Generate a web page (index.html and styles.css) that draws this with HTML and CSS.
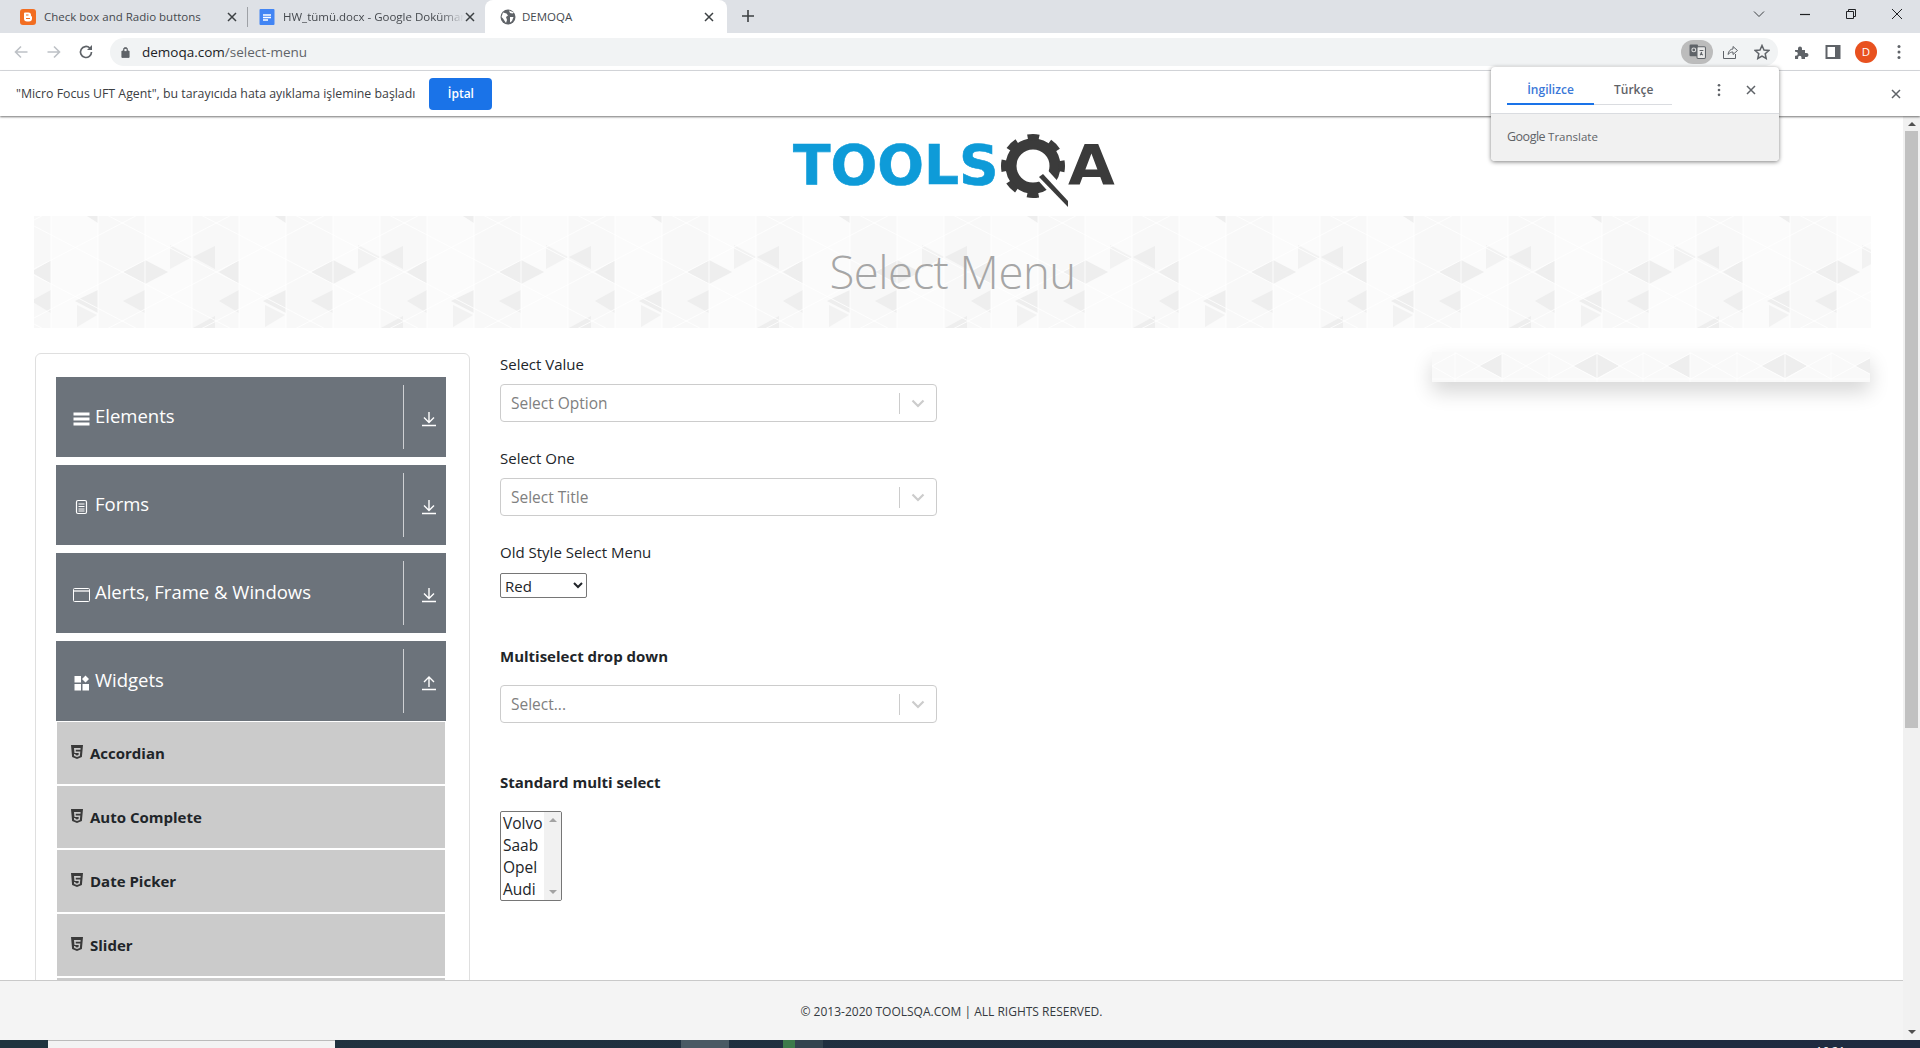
FILE: index.html
```html
<!DOCTYPE html>
<html lang="tr">
<head>
  <meta charset="UTF-8">
  <meta name="viewport" content="width=device-width, initial-scale=1.0">
  <title>DEMOQA</title>
  <link rel="stylesheet" href="styles.css">
</head>
<body>

<svg class="sprites" width="0" height="0">
  <defs>
    <symbol id="i-close" viewBox="0 0 12 12"><path d="M2 2l8 8M10 2l-8 8" fill="none" stroke="currentColor" stroke-width="1.5"/></symbol>
    <symbol id="i-dots" viewBox="0 0 4 16"><circle cx="2" cy="2.5" r="1.5"/><circle cx="2" cy="8" r="1.5"/><circle cx="2" cy="13.5" r="1.5"/></symbol>
    <symbol id="i-down" viewBox="0 0 16 16"><path d="M8 1v10M3 6.500L8 11.500l5-5M1 14.500h14" fill="none" stroke="currentColor" stroke-width="1.400"/></symbol>
    <symbol id="i-up" viewBox="0 0 16 16"><path d="M8 12V2M3 7l5-5 5 5M1 14.500h14" fill="none" stroke="currentColor" stroke-width="1.400"/></symbol>
    <symbol id="i-html5" viewBox="0 0 12 14"><path fill-rule="evenodd" d="M0 0h12l-1.100 12L6 14l-4.900-2zM3 3l.5 5h4.200l-.2 2L6 10.600 4.500 10l-.1-1H3l.2 2L6 12l2.800-1 .5-4.500H4.800L4.700 4.700h4.800L9.600 3z"/></symbol>
    <symbol id="i-chevron" viewBox="0 0 20 20"><path d="M4.500 7.500L10 13l5.500-5.500" fill="none" stroke="currentColor" stroke-width="2.200"/></symbol>

    <pattern id="hero-tri" width="188" height="112" patternUnits="userSpaceOnUse">
      <rect width="188" height="112" fill="#f8f8f8"/>
      <path fill="#fbfbfb" d="M17 0h47v112H17zM111 0h47v112h-47z"/>
      <path fill="#eeeeee" d="M89 56l22-12v24zM111 44v24l23-12zM89 85l22-11v23zM41 85l23-11v23zM159 41l22-11v23zM-3 56l20-12v24zM-3 85l20-11v23zM185 56l20-12v24zM185 85l20-11v23zM53 0h11v7zM159 112l22-12v12z"/>
      <path fill="#f2f2f2" d="M43 89l20 10-20 12zM136 29v24l22-12z"/>
      <path fill="none" stroke="#ffffff" stroke-opacity=".8" d="M17 0v112M64 0v112M111 0v112M158 0v112M0-88L188 10M0-39L188 59M0 10L188 108M0 59L188 157M0 108L188 206M0 4L188-94M0 53L188-45M0 102L188 4M0 151L188 53M0 200L188 102"/>
    </pattern>
    <pattern id="ad-tri" width="188" height="30" patternUnits="userSpaceOnUse">
      <rect width="188" height="30" fill="#f9f9f9"/>
      <path fill="#eeeeee" d="M47 14L70 2v24zM141 14l24-12v24zM165 2v24l22-12z"/>
      <path fill="none" stroke="#ffffff" stroke-opacity=".8" d="M0 14L24 1l23 13 24-13 23 13 23-13 24 13 24-13 23 13M0 14l23 13 24-13 24 13 23-13 23 13 24-13 24 13 23-13M23 0v30M70 0v30M117 0v30M165 0v30M0 27h188"/>
    </pattern>
  </defs>
</svg>

<div class="tabstrip">
  <div class="tab">
    <svg class="favicon" viewBox="0 0 16 16"><rect width="16" height="16" rx="3" fill="#f26d21"/><path d="M5 3.500h3.500a2.500 2.500 0 0 1 2.500 2.500v.5a1 1 0 0 0 1 1v2A3 3 0 0 1 9 12.500H7A3 3 0 0 1 4 9.500V4.500a1 1 0 0 1 1-1z" fill="#fff"/><path d="M6 6h2.500M6 9.500h4" stroke="#f26d21" stroke-width="1.200"/></svg>
    <span class="tab-title">Check box and Radio buttons</span>
    <svg class="tab-x"><use href="#i-close"/></svg>
  </div>
  <div class="tab tab-docs">
    <svg class="favicon" viewBox="0 0 16 16"><path d="M1.500 0h13a1 1 0 0 1 1 1v14a1 1 0 0 1-1 1h-13a1 1 0 0 1-1-1V1a1 1 0 0 1 1-1z" fill="#4285f4"/><path d="M4 6h8M4 8.500h8M4 11h5" stroke="#fff" stroke-width="1.300"/></svg>
    <span class="tab-title tab-title-fade">HW_tümü.docx - Google Doküman</span>
    <svg class="tab-x"><use href="#i-close"/></svg>
  </div>
  <div class="tab tab-active">
    <svg class="favicon" viewBox="0 0 16 16"><circle cx="8" cy="8" r="7.500" fill="#5f6368"/><path d="M3 3.500l3.500 1 1.500 2-2 1.500 1 3-1 3L3 9.500 1.500 8zM9 1.500l1 2.500 2.500.5 1.500-1M10 8h3.500L12 12l-2 1.500z" fill="#fff"/></svg>
    <span class="tab-title">DEMOQA</span>
    <svg class="tab-x"><use href="#i-close"/></svg>
  </div>
  <svg class="new-tab" viewBox="0 0 12 12"><path d="M6 0v12M0 6h12" stroke="#3c4043" stroke-width="1.600"/></svg>
  <div class="window-controls">
    <svg viewBox="0 0 12 12"><path d="M1 3.500l5 5 5-5" fill="none" stroke="#3c4043"/></svg>
    <svg viewBox="0 0 12 12"><path d="M1 6.500h10" stroke="#202124" stroke-width="1.200"/></svg>
    <svg viewBox="0 0 12 12"><path d="M1.500 3.500h7v7h-7zM3.500 3.500v-2h7v7h-2" fill="none" stroke="#202124"/></svg>
    <svg viewBox="0 0 12 12"><path d="M1 1l10 10M11 1L1 11" stroke="#202124"/></svg>
  </div>
</div>

<div class="toolbar">
  <svg class="nav-icon nav-off" viewBox="0 0 16 16"><path d="M14.500 8h-12M8 2.500L2.500 8 8 13.500" fill="none" stroke="currentColor" stroke-width="1.600"/></svg>
  <svg class="nav-icon nav-off" viewBox="0 0 16 16"><path d="M1.500 8h12M8 2.500L13.500 8 8 13.500" fill="none" stroke="currentColor" stroke-width="1.600"/></svg>
  <svg class="nav-icon" viewBox="0 0 16 16"><path d="M13.500 8A5.500 5.500 0 1 1 11.800 4" fill="none" stroke="currentColor" stroke-width="1.700"/><path d="M14 1v5H9z"/></svg>
  <div class="omnibox">
    <svg class="lock" viewBox="0 0 10 12"><path d="M1 5h8v7H1z M2.800 5V3.200a2.200 2.200 0 0 1 4.400 0V5" fill="#5f6368" stroke="#5f6368"/><rect x="3.800" y="2.600" width="2.400" height="2.400" fill="#f1f3f4"/></svg>
    <span class="url">demoqa.com<span class="url-path">/select-menu</span></span>
    <span class="translate-chip">
      <svg viewBox="0 0 16 16"><rect x=".5" y="1.500" width="8" height="11" rx="1" fill="#5f6368"/><rect x="7.500" y="3.500" width="8" height="11" rx="1" fill="#e8e8e8" stroke="#5f6368"/><path d="M10 7h3.500M12 8.500l-1.500 3M11 9l2 2.500" stroke="#5f6368" fill="none"/><circle cx="4.500" cy="6.500" r="1.800" fill="none" stroke="#ddd"/></svg>
    </span>
    <svg class="omni-icon" viewBox="0 0 16 16"><path d="M1.500 7v7.500h12V10M6 10.500C6.500 7 8.500 5 11 5V2.500L15.500 6.500 11 10.500V8C9 8 7.500 8.800 6 10.500z" fill="none" stroke="currentColor"/></svg>
    <svg class="omni-icon" viewBox="0 0 16 16"><path d="M8 1.500l2 4.500 4.800.5-3.600 3.200 1 4.800L8 12.100 3.800 14.500l1-4.800L1.200 6.500 6 6z" fill="none" stroke="currentColor" stroke-width="1.500"/></svg>
  </div>
  <svg class="tool-icon" viewBox="0 0 16 16"><path d="M1 6h3V4.500a2 2 0 0 1 4 0V6h3v3h1.500a2 2 0 0 1 0 4H11v2H7.500v-1.500a1.700 1.700 0 0 0-3.400 0V15H1v-3.200h.8a2 2 0 0 0 0-4H1z" fill="#5f6368"/></svg>
  <svg class="tool-icon" viewBox="0 0 16 16"><rect x="1.500" y="2" width="13" height="12" fill="none" stroke="#5f6368" stroke-width="2"/><rect x="10" y="2" width="5" height="12" fill="#5f6368"/></svg>
  <span class="avatar">D</span>
  <svg class="tool-dots"><use href="#i-dots"/></svg>
</div>

<div class="infobar">
  <span class="infobar-text">"Micro Focus UFT Agent", bu tarayıcıda hata ayıklama işlemine başladı</span>
  <button class="infobar-btn">İptal</button>
  <svg class="infobar-x"><use href="#i-close"/></svg>
</div>

<div class="translate-pop">
  <div class="pop-head">
    <div class="pop-tabs">
      <span class="pop-tab pop-tab-on">İngilizce</span>
      <span class="pop-tab">Türkçe</span>
    </div>
    <svg class="pop-dots"><use href="#i-dots"/></svg>
    <svg class="pop-x"><use href="#i-close"/></svg>
  </div>
  <div class="pop-foot"><span class="g-word">Google</span> Translate</div>
</div>

<div class="viewport">
  <div class="page-col">
    <div class="page">
      <header class="logo-row">
        <div class="logo">
          <span class="logo-tools">TOOLS</span>
          <svg class="logo-gear" viewBox="0 0 68 74">
            <circle cx="32" cy="33" r="22" fill="none" stroke="#3b3b3b" stroke-width="11"/>
            <circle cx="32" cy="33" r="29" fill="none" stroke="#3b3b3b" stroke-width="6" stroke-dasharray="11.400 11.400" stroke-dashoffset="5.700"/>
            <path d="M38 38l29 32" stroke="#fff" stroke-width="14"/>
            <path d="M42 41l25 27v6L38 44z" fill="#3b3b3b"/>
          </svg>
          <span class="logo-a">A</span>
        </div>
      </header>

      <div class="hero">
        <svg class="hero-bg"><rect width="100%" height="100%" fill="url(#hero-tri)"/></svg>
        <h1 class="hero-title">Select Menu</h1>
      </div>

      <div class="content">
        <aside class="side-card">
          <div class="group">
            <svg class="group-icon" viewBox="0 0 16 16"><path d="M0 1.500h16v3H0zM0 6.500h16v3H0zM0 11.500h16v3H0z" fill="#fff"/></svg>
            <span class="group-name">Elements</span>
            <span class="group-arrow"><svg><use href="#i-down"/></svg></span>
          </div>
          <div class="group">
            <svg class="group-icon" viewBox="0 0 16 16"><rect x="3" y="1.500" width="10" height="13" rx="1.500" fill="none" stroke="#fff" stroke-width="1.200"/><path d="M5 5h6M5 7.500h6M5 10h6M5 12h6" stroke="#fff"/></svg>
            <span class="group-name">Forms</span>
            <span class="group-arrow"><svg><use href="#i-down"/></svg></span>
          </div>
          <div class="group">
            <svg class="group-icon" viewBox="0 0 17 16"><rect x=".5" y="1.500" width="16" height="13" rx="1" fill="none" stroke="#fff"/><path d="M1 4h15" stroke="#fff" stroke-width="1.300"/></svg>
            <span class="group-name">Alerts, Frame &amp; Windows</span>
            <span class="group-arrow"><svg><use href="#i-down"/></svg></span>
          </div>
          <div class="group">
            <svg class="group-icon" viewBox="0 0 16 16"><path d="M1 1h6.500v6.500H1zM1 9h6.500v6.500H1zM9 9h6.500v6.500H9zM12 .5l3.500 3.500L12 7.500 8.500 4z" fill="#fff"/></svg>
            <span class="group-name">Widgets</span>
            <span class="group-arrow"><svg><use href="#i-up"/></svg></span>
          </div>
          <ul class="items">
            <li class="item"><svg><use href="#i-html5"/></svg>Accordian</li>
            <li class="item"><svg><use href="#i-html5"/></svg>Auto Complete</li>
            <li class="item"><svg><use href="#i-html5"/></svg>Date Picker</li>
            <li class="item"><svg><use href="#i-html5"/></svg>Slider</li>
            <li class="item"></li>
          </ul>
        </aside>

        <section class="form-col">
          <div class="field">
            <label class="lbl">Select Value</label>
            <div class="combo"><span>Select Option</span><i class="combo-sep"></i><svg class="combo-arrow"><use href="#i-chevron"/></svg></div>
          </div>
          <div class="field">
            <label class="lbl">Select One</label>
            <div class="combo"><span>Select Title</span><i class="combo-sep"></i><svg class="combo-arrow"><use href="#i-chevron"/></svg></div>
          </div>
          <div class="field field-old">
            <label class="lbl">Old Style Select Menu</label>
            <select class="old-select"><option>Red</option><option>Blue</option><option>Green</option></select>
          </div>
          <div class="field field-wide">
            <label class="lbl lbl-strong">Multiselect drop down</label>
            <div class="combo"><span>Select...</span><i class="combo-sep"></i><svg class="combo-arrow"><use href="#i-chevron"/></svg></div>
          </div>
          <div class="field field-wide">
            <label class="lbl lbl-strong">Standard multi select</label>
            <div class="listbox">
              <ul class="listbox-items"><li>Volvo</li><li>Saab</li><li>Opel</li><li>Audi</li></ul>
              <div class="listbox-bar"><i class="tri-up"></i><i class="tri-down"></i></div>
            </div>
          </div>
        </section>

        <div class="ad-box">
          <svg class="ad-bg"><rect width="100%" height="100%" fill="url(#ad-tri)"/></svg>
        </div>
      </div>
    </div>

    <footer class="site-footer">© 2013-2020 TOOLSQA.COM | ALL RIGHTS RESERVED.</footer>
  </div>

  <div class="scrollbar">
    <i class="tri-up"></i>
    <div class="thumb"></div>
    <i class="tri-down"></i>
  </div>
</div>

<div class="taskbar">
  <i class="task-search"></i>
  <i class="task-app"></i>
  <i class="task-green"></i>
  <i class="task-slate"></i>
  <span class="task-clock">16:21</span>
</div>

</body>
</html>
```

FILE: styles.css
```css
* {
  box-sizing: border-box;
}
html, body {
  margin: 0;
  height: 1048px;
  overflow: hidden;
}
body {
  position: relative;
  display: flex;
  flex-direction: column;
  font-family: "Open Sans", "Noto Sans", sans-serif;
  color: #212529;
  background: #fff;
}
.sprites {
  position: absolute;
}

/* browser tabs */
.tabstrip {
  display: flex;
  align-items: flex-end;
  height: 33px;
  flex: none;
  padding-left: 9px;
  background: #dee1e6;
}
.tab {
  display: flex;
  align-items: center;
  width: 238px;
  height: 33px;
  padding: 0 5px 0 11px;
  position: relative;
  color: #45494e;
  font-size: 11.500px;
}
.tab-docs::before {
  content: "";
  position: absolute;
  left: 0;
  top: 7px;
  height: 20px;
  border-left: 1px solid #9ea1a6;
}
.tab-docs {
  padding-left: 12px;
}
.tab-active {
  width: 242px;
  padding: 0 8px 0 15px;
  background: #fff;
  border-radius: 8px 8px 0 0;
}
.favicon {
  width: 16px;
  height: 16px;
  flex: none;
}
.tab-title {
  flex: 1;
  margin-left: 8px;
  white-space: nowrap;
  overflow: hidden;
}
.tab-active .tab-title {
  margin-left: 6px;
}
.tab-title-fade {
  -webkit-mask-image: linear-gradient(to left, transparent, #000 24px);
  mask-image: linear-gradient(to left, transparent, #000 24px);
}
.tab-x {
  width: 12px;
  height: 12px;
  margin-right: 4px;
  flex: none;
  color: #3c4043;
}
.new-tab {
  width: 12px;
  height: 12px;
  margin: 0 0 11px 15px;
}
.window-controls {
  display: flex;
  gap: 34px;
  margin-left: auto;
  margin-right: 17px;
  margin-bottom: 13px;
}
.window-controls svg {
  width: 12px;
  height: 12px;
}

/* address bar */
.toolbar {
  display: flex;
  align-items: center;
  height: 38px;
  flex: none;
  padding-left: 13px;
  background: #fff;
  border-bottom: 1px solid #dadce0;
}
.nav-icon {
  width: 16px;
  height: 16px;
  margin-right: 17px;
  color: #5f6368;
  fill: #5f6368;
}
.nav-off {
  color: #bdc1c6;
}
.nav-off + .nav-off {
  margin-right: 16px;
}
.omnibox {
  display: flex;
  align-items: center;
  width: 1668px;
  height: 28px;
  margin-left: -1px;
  padding: 0 8px 0 11px;
  background: #f1f3f4;
  border-radius: 14px;
}
.lock {
  width: 9px;
  height: 12px;
}
.url {
  flex: 1;
  margin-left: 12px;
  font-size: 13.500px;
  color: #202124;
}
.url-path {
  color: #5f6368;
}
.translate-chip {
  display: flex;
  align-items: center;
  justify-content: center;
  width: 32px;
  height: 24px;
  background: #bcbcbc;
  border-radius: 12px;
}
.translate-chip svg {
  width: 17px;
  height: 17px;
}
.omni-icon {
  width: 16px;
  height: 16px;
  margin-left: 9px;
  margin-right: 8px;
  color: #5f6368;
}
.omni-icon + .omni-icon {
  margin-left: 8px;
  margin-right: 0;
}
.tool-icon {
  width: 16px;
  height: 16px;
  margin-left: 16px;
}
.tool-icon + .tool-icon {
  margin-left: 15px;
}
.avatar {
  width: 22px;
  height: 22px;
  margin-left: 14px;
  border-radius: 50%;
  background: #e8511f;
  color: #fff;
  font-size: 11.500px;
  line-height: 22px;
  text-align: center;
}
.tool-dots {
  width: 4px;
  height: 16px;
  margin-left: 20px;
  fill: #5f6368;
}

/* debug bar */
.infobar {
  display: flex;
  align-items: center;
  height: 45px;
  flex: none;
  padding: 0 18px 0 16px;
  background: #fff;
  box-shadow: 0 1px 2px rgba(0, 0, 0, .55);
  position: relative;
  z-index: 2;
}
.infobar-text {
  font-size: 12.330px;
  color: #3c4043;
}
.infobar-btn {
  width: 63px;
  height: 32px;
  margin-left: 14px;
  border: 0;
  border-radius: 4px;
  background: #1a73e8;
  color: #fff;
  font-family: inherit;
  font-size: 12px;
  font-weight: 600;
}
.infobar-x {
  width: 12px;
  height: 12px;
  margin-left: auto;
  color: #5f6368;
}

/* translate popup, over the page */
.translate-pop {
  position: absolute;
  left: 1491px;
  top: 67px;
  width: 288px;
  height: 94px;
  z-index: 5;
  background: #fff;
  border-radius: 4px;
  box-shadow: 0 1px 4px rgba(0, 0, 0, .5);
  overflow: hidden;
}
.pop-head {
  display: flex;
  align-items: flex-start;
  height: 47px;
  padding: 12px 0 0 16px;
  border-bottom: 1px solid #dadce0;
}
.pop-tabs {
  display: flex;
  width: 165px;
  height: 26px;
  border-bottom: 1px solid #dadce0;
}
.pop-tab {
  width: 87px;
  font-size: 12px;
  font-weight: 600;
  color: #5f6368;
  text-align: center;
  line-height: 22px;
}
.pop-tab + .pop-tab {
  width: 78px;
  padding-right: 37px;
  padding-left: 20px;
  white-space: nowrap;
}
.pop-tab-on {
  height: 26px;
  color: #3b78d8;
  border-bottom: 2px solid #1a73e8;
}
.pop-dots {
  width: 4px;
  height: 14px;
  margin: 4px 0 0 45px;
  fill: #5f6368;
}
.pop-x {
  width: 12px;
  height: 12px;
  margin: 5px 0 0 24px;
  color: #5f6368;
}
.pop-foot {
  height: 47px;
  padding: 14px 0 0 16px;
  background: #f1f1f1;
  color: #5f6368;
  font-size: 11.500px;
}
.g-word {
  font-size: 12.500px;
  letter-spacing: -.5px;
}

/* page */
.viewport {
  display: flex;
  flex: 1;
  min-height: 0;
}
.page-col {
  display: flex;
  flex-direction: column;
  flex: 1;
  min-width: 0;
}
.page {
  flex: 1;
  min-height: 0;
  overflow: hidden;
  background: #fff;
}
.logo-row {
  display: flex;
  justify-content: center;
  height: 100px;
  padding: 17px 0 0 4px;
}
.logo {
  display: flex;
  align-items: flex-start;
  height: 74px;
}
.logo-tools, .logo-a {
  display: inline-block;
  font-family: "DejaVu Sans", sans-serif;
  font-weight: 700;
  font-size: 55px;
  line-height: 64px;
  transform-origin: left center;
}
.logo-tools {
  width: 200px;
  color: #0e9bd8;
  -webkit-text-stroke: .6px #0e9bd8;
  white-space: nowrap;
}
.logo-gear {
  width: 68px;
  height: 74px;
  margin-left: 8px;
  overflow: visible;
}
.logo-a {
  width: 46px;
  margin-left: -1px;
  color: #3b3b3b;
  transform: scaleX(1.1);
}
.hero {
  position: relative;
  height: 112px;
  margin: 0 32px 0 34px;
  display: flex;
  align-items: center;
  justify-content: center;
}
.hero-bg {
  position: absolute;
  inset: 0;
  width: 100%;
  height: 100%;
}
.hero-title {
  position: relative;
  margin: -2px 0 0;
  font-size: 45.500px;
  font-weight: 300;
  letter-spacing: -.5px;
  color: #a6a6a6;
}
.content {
  display: grid;
  grid-template-columns: 435px 467px 1fr;
  padding: 25px 33px 0 35px;
}

/* left menu */
.side-card {
  display: flex;
  flex-direction: column;
  gap: 8px;
  height: 900px;
  padding: 23px 23px 0 20px;
  border: 1px solid #dfdfdf;
  border-radius: 6px;
}
.group {
  display: flex;
  align-items: center;
  height: 80px;
  flex: none;
  padding-left: 17px;
  background: #6c737b;
  color: #fff;
  position: relative;
}
.group-icon {
  width: 17px;
  height: 16px;
  margin-top: 4px;
  flex: none;
}
.group-name {
  flex: 1;
  margin: -3px 0 0 5px;
  font-size: 18.500px;
}
.group-arrow {
  display: flex;
  align-items: center;
  justify-content: flex-end;
  width: 43px;
  height: 64px;
  padding-right: 9px;
  border-left: 1px solid #ced0d3;
}
.group-arrow svg {
  width: 16px;
  height: 16px;
  margin-top: 4px;
}
.items {
  display: flex;
  flex-direction: column;
  gap: 2px;
  margin: -7px 1px 0;
  padding: 0;
  list-style: none;
}
.item {
  display: flex;
  align-items: center;
  gap: 7px;
  height: 62px;
  flex: none;
  padding-left: 14px;
  background: #cbcbcb;
  font-size: 15px;
  font-weight: 700;
}
.item svg {
  width: 12px;
  height: 14px;
  margin-top: -2px;
  fill: #3a3a3a;
}

/* form */
.form-col {
  margin-left: 30px;
  font-size: 15px;
}
.field {
  margin-bottom: 25px;
}
.field-old {
  margin-bottom: 47px;
}
.field-wide {
  margin-bottom: 48px;
}
.lbl {
  display: block;
  height: 24px;
  margin-bottom: 7px;
  line-height: 22px;
}
.lbl-strong {
  margin-bottom: 16px;
  font-weight: 700;
}
.field-old .lbl {
  margin-bottom: 8px;
}
.combo {
  display: flex;
  align-items: center;
  height: 38px;
  padding-left: 10px;
  border: 1px solid #ccc;
  border-radius: 4px;
  color: #808080;
  font-size: 15.500px;
}
.combo span {
  flex: 1;
}
.combo-sep {
  width: 1px;
  height: 21px;
  background: #ccc;
}
.combo-arrow {
  width: 20px;
  height: 20px;
  margin: 0 8px;
  color: #ccc;
}
.old-select {
  display: block;
  width: 87px;
  height: 25px;
  background: #fff;
  border: 1px solid #767676;
  border-radius: 2px;
  font-family: inherit;
  font-size: 15px;
  color: #212529;
}
.listbox {
  display: flex;
  width: 62px;
  height: 90px;
  border: 1px solid #767676;
  border-radius: 2px;
  overflow: hidden;
}
.listbox-items {
  flex: 1;
  margin: 0;
  padding: 0;
  list-style: none;
  font-size: 15.500px;
}
.listbox-items li {
  height: 22px;
  padding-left: 2px;
  line-height: 22px;
}
.listbox-bar {
  display: flex;
  flex-direction: column;
  align-items: center;
  justify-content: space-between;
  width: 17px;
  padding: 6px 0;
  background: #f1f1f1;
}
.tri-up, .tri-down {
  display: block;
  width: 0;
  height: 0;
  border-left: 4px solid transparent;
  border-right: 4px solid transparent;
}
.tri-up {
  border-bottom: 4px solid #a3a3a3;
}
.tri-down {
  border-top: 4px solid #a3a3a3;
}
.ad-box {
  position: relative;
  width: 438px;
  height: 30px;
  margin-top: -1px;
  justify-self: end;
  box-shadow: 0 10px 20px rgba(0, 0, 0, .16);
}
.ad-bg {
  position: absolute;
  inset: 0;
  width: 100%;
  height: 100%;
}
.site-footer {
  height: 60px;
  flex: none;
  padding-top: 21px;
  background: #f4f4f4;
  border-top: 1px solid #c9c9c9;
  font-size: 12px;
  line-height: 20px;
  text-align: center;
  color: #343a40;
}
.scrollbar {
  display: flex;
  flex-direction: column;
  align-items: center;
  width: 17px;
  flex: none;
  padding: 6px 0;
  background: #f1f1f1;
}
.thumb {
  width: 13px;
  height: 597px;
  margin: 5px 0 auto;
  background: #c1c1c1;
}
.scrollbar .tri-up {
  border-bottom-color: #505050;
}
.scrollbar .tri-down {
  border-top-color: #505050;
}

/* taskbar, cut off by the window */
.taskbar {
  display: flex;
  height: 8px;
  flex: none;
  padding-left: 48px;
  overflow: hidden;
  background: linear-gradient(to right, #20343f, #1f2a40);
}
.taskbar i {
  display: block;
  height: 8px;
}
.task-search {
  width: 287px;
  background: #f3f3f3;
  border-top: 1px solid #bbb;
}
.task-app {
  width: 48px;
  margin-left: 346px;
  background: #4a5a64;
}
.task-green {
  width: 12px;
  margin-left: 54px;
  background: #3c7a4a;
}
.task-slate {
  width: 28px;
  background: #33444f;
}
.task-clock {
  margin-left: auto;
  margin-right: 75px;
  margin-top: 4px;
  color: #fff;
  font-size: 11.500px;
  line-height: 14px;
}
```
